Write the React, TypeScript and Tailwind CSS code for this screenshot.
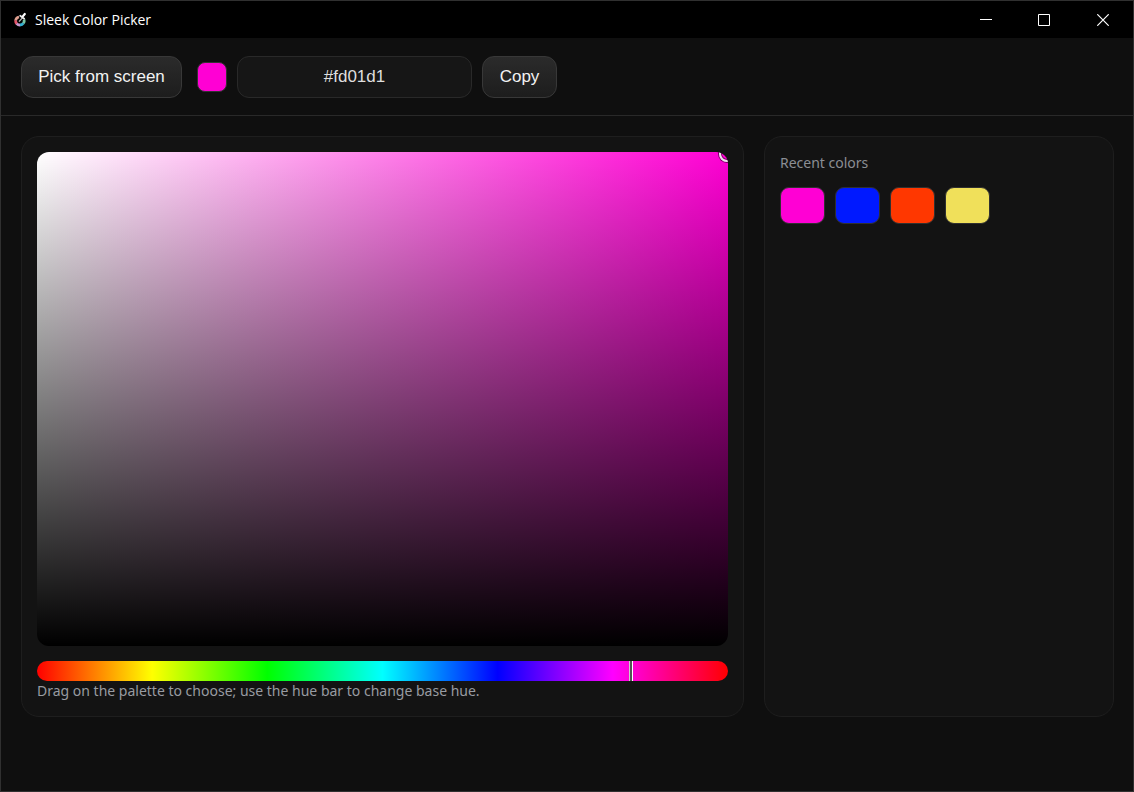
import { useState } from "react";

const recent = [
  { hex: "#fd01d1", fill: "bg-[#ff00d4]" },
  { hex: "#0019ff", fill: "bg-[#0019ff]" },
  { hex: "#ff3700", fill: "bg-[#ff3700]" },
  { hex: "#f0e05a", fill: "bg-[#f0e05a]" },
];

const button =
  "h-[42px] rounded-xl border border-[#383838] bg-linear-to-b from-[#2b2b2b] to-[#1d1d1d] font-['Liberation_Sans',Arial,sans-serif] text-[17px] leading-5 text-[#f2f2f2]";

function AppIcon() {
  return (
    <svg viewBox="0 0 16 16" className="size-4" fill="none" aria-hidden="true">
      <g strokeWidth="2.8">
        <path d="M3.6 8.6A4.4 4.4 0 0 1 7 5" stroke="#e0a090" />
        <path d="M3.6 8.4a4.4 4.4 0 0 0 1.2 3.3" stroke="#e9556b" />
        <path d="M4.7 11.6A4.4 4.4 0 0 0 8 13" stroke="#c79bd0" />
        <path d="M8 13a4.4 4.4 0 0 0 3.4-1.8" stroke="#35b0d0" />
        <path d="M11.4 11.2a4.4 4.4 0 0 0 .7-3.6" stroke="#7ac6a4" />
      </g>
      <path d="M7 9.6 10.6 5.6" stroke="#bbb" strokeWidth="1.4" />
      <path d="m8.2 3.8 4 3" stroke="#e8e8e8" strokeWidth="1.8" strokeLinecap="round" />
      <path d="m10.8 4.4 2-2.4" stroke="#fff" strokeWidth="2.2" strokeLinecap="round" />
    </svg>
  );
}

function TitleBar() {
  return (
    <header className="flex h-[37px] items-center justify-between bg-black">
      <div className="flex items-center gap-[7px] pl-[11px]">
        <AppIcon />
        <h1 className="font-['Open_Sans','Noto_Sans',sans-serif] text-sm text-white">Sleek Color Picker</h1>
      </div>
      <div className="flex h-full text-white">
        <button aria-label="Minimize" className="flex w-[58px] items-center justify-center">
          <svg viewBox="0 0 12 12" className="size-3" stroke="currentColor"><path d="M0 5.5h12" /></svg>
        </button>
        <button aria-label="Maximize" className="flex w-[58px] items-center justify-center">
          <svg viewBox="0 0 12 12" className="size-3" stroke="currentColor" fill="none"><path d="M.5.5h11v11H.5z" /></svg>
        </button>
        <button aria-label="Close" className="flex w-[60px] items-center justify-center">
          <svg viewBox="0 0 12 12" className="size-3" stroke="currentColor" strokeWidth="1.2"><path d="m.3.3 11.4 11.4M11.7.3.3 11.7" /></svg>
        </button>
      </div>
    </header>
  );
}

export default function App() {
  const [hex, setHex] = useState("#fd01d1");
  return (
    <div className="min-h-screen border border-[#303030] bg-[#0f0f0f] font-['Noto_Sans','Open_Sans',sans-serif]">
      <TitleBar />
      <div className="flex items-center gap-[10px] border-b border-[#292929] px-5 pt-[18px] pb-[17px]">
        <button className={`${button} w-[161px]`}>Pick from screen</button>
        <div className="ml-[5px] size-[30px] rounded-lg border border-[#333] bg-[#ff00d4]" />
        <input
          aria-label="Hex color"
          value={hex}
          onChange={(e) => setHex(e.target.value)}
          className="h-[42px] w-[235px] rounded-xl border border-[#292929] bg-[#161616] text-center font-['Liberation_Sans',Arial,sans-serif] text-[17px] text-[#dedede] outline-none"
        />
        <button className={`${button} w-[75px]`}>Copy</button>
      </div>
      <main className="grid grid-cols-[minmax(0,1fr)_350px] gap-5 py-5 pr-[19px] pl-5">
        <section className="rounded-[18px] border border-[#1e1e1e] bg-[#131313] p-[15px]">
          <div className="relative aspect-[7/5] overflow-hidden rounded-xl bg-[linear-gradient(to_top,#000,transparent),linear-gradient(to_right,#fff,#ff00d4)]">
            <div className="absolute -top-[6px] -right-[7px] size-4 rounded-full border-2 border-[#e8e8e8] shadow-[0_0_0_1px_#0008,inset_0_0_0_1px_#0008]" />
          </div>
          <div className="relative mt-[15px] h-5 overflow-hidden rounded-[10px] bg-[linear-gradient(to_right,#f00,#ff0,#0f0,#0ff,#00f,#f0f,#f00)]">
            <div className="absolute inset-y-0 left-[85.7%] w-1 border-x border-r-white border-l-[#ccc] bg-[#555]" />
          </div>
          <p className="text-sm leading-5 text-[#989ba1]">Drag on the palette to choose; use the hue bar to change base hue.</p>
        </section>
        <aside className="rounded-[18px] border border-[#1e1e1e] bg-[#131313] p-[15px]">
          <h2 className="text-sm leading-[22px] text-[#8b8e93]">Recent colors</h2>
          <div className="mt-[13px] flex gap-[10px]">
            {recent.map((c) => (
              <button key={c.hex} aria-label={c.hex} className={`h-[37px] w-[45px] rounded-[9px] border border-[#303030] ${c.fill}`} />
            ))}
          </div>
        </aside>
      </main>
    </div>
  );
}
